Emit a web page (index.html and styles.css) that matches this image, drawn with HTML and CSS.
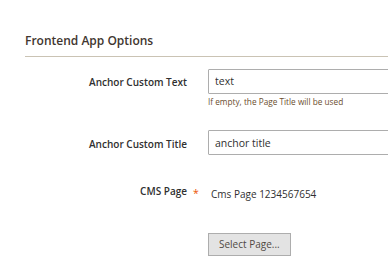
FILE: index.html
```html
<!DOCTYPE html>
<html>
<head>
  <title>Frontend App Options</title>
  <link rel="stylesheet" href="styles.css">
</head>
<body>

<div class="fieldset">
  <h2 class="legend">Frontend App Options</h2>

  <div class="field">
    <label class="label" for="anchor-text">Anchor Custom Text</label>
    <span class="mark"></span>
    <div class="control">
      <input id="anchor-text" class="input" type="text" value="text">
      <div class="note">If empty, the Page Title will be used</div>
    </div>
  </div>

  <div class="field">
    <label class="label" for="anchor-title">Anchor Custom Title</label>
    <span class="mark"></span>
    <div class="control">
      <input id="anchor-title" class="input" type="text" value="anchor title">
    </div>
  </div>

  <div class="field field-value">
    <label class="label">CMS Page</label>
    <span class="mark required">*</span>
    <div class="control">
      <div class="value">Cms Page 1234567654</div>
    </div>
  </div>

  <div class="field field-button">
    <span class="label"></span>
    <span class="mark"></span>
    <div class="control">
      <button type="button" class="button">Select Page...</button>
    </div>
  </div>
</div>

</body>
</html>
```

FILE: styles.css
```css
body {
  margin: 0;
  overflow: hidden;
  font-family: "Open Sans", "DejaVu Sans", sans-serif;
  color: #303030;
  background: #fff;
}

.fieldset {
  width: 460px;
}

.legend {
  margin: 32px 0 11px 25px;
  padding: 0 0 6px 0;
  border-bottom: 1px solid #cac3b4;
  font-size: 12px;
  line-height: 18px;
  font-weight: 600;
  color: #41362f;
}

.field {
  display: grid;
  grid-template-columns: 187px 21px 1fr;
  margin-bottom: 22px;
}

.label {
  padding-top: 6px;
  text-align: right;
  font-size: 10px;
  line-height: 16px;
  font-weight: 600;
}

.mark {
  padding: 8px 0 0 6px;
  font-size: 10.5px;
  line-height: 16px;
}

.required {
  color: #eb5202;
}

.input {
  box-sizing: border-box;
  width: 100%;
  height: 25px;
  margin: 0;
  padding: 0 6px;
  border: 1px solid #adadad;
  border-radius: 1px;
  font-family: inherit;
  font-size: 10.5px;
  color: #303030;
  background: #fff;
}

.note {
  margin-top: 2px;
  font-size: 8.25px;
  line-height: 12px;
  color: #6b4e2e;
}

.value {
  padding: 9px 0 0 3px;
  font-size: 10px;
  line-height: 16px;
}

.field-value {
  margin-bottom: 29px;
}

.button {
  height: 23px;
  padding: 0 10px;
  border: 1px solid #adadad;
  border-radius: 0;
  background: #e3e3e3;
  font-family: inherit;
  font-size: 10px;
  color: #514943;
  cursor: pointer;
}
```
